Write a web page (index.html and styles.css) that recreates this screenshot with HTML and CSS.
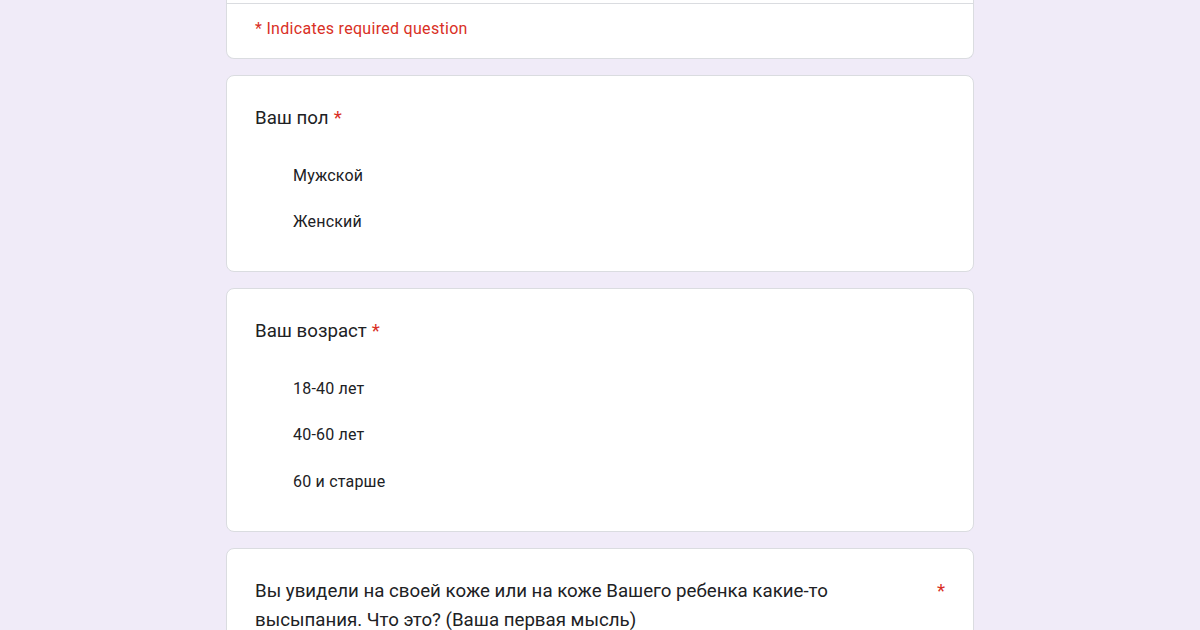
FILE: index.html
```html
<!DOCTYPE html>
<html lang="ru">
<head>
<meta charset="utf-8">
<title>Форма</title>
<link rel="stylesheet" href="styles.css">
</head>
<body>
<main class="form">
  <section class="card card-head">
    <div class="head-top"></div>
    <div class="required-note">* Indicates required question</div>
  </section>

  <section class="card question">
    <div class="q-title"><span>Ваш пол</span><span class="req">*</span></div>
    <div class="options">
      <div class="option">Мужской</div>
      <div class="option">Женский</div>
    </div>
  </section>

  <section class="card question">
    <div class="q-title"><span>Ваш возраст</span><span class="req">*</span></div>
    <div class="options">
      <div class="option">18-40 лет</div>
      <div class="option">40-60 лет</div>
      <div class="option">60 и старше</div>
    </div>
  </section>

  <section class="card question">
    <div class="q-title q-long">
      <span class="q-text">Вы увидели на своей коже или на коже Вашего ребенка какие-то высыпания. Что это? (Ваша первая мысль)</span>
      <span class="req">*</span>
    </div>
  </section>
</main>
</body>
</html>
```

FILE: styles.css
```css
html, body {
  margin: 0;
  padding: 0;
  background: #f0ebf8;
  font-family: Roboto, "Noto Sans", Arial, sans-serif;
  color: #202124;
}

.form {
  width: 748px;
  margin: 0 auto;
  display: flex;
  flex-direction: column;
  gap: 16px;
  padding-bottom: 40px;
}

.card {
  background: #fff;
  border: 1px solid #dadce0;
  border-radius: 8px;
  box-sizing: border-box;
}

.card-head {
  border-top: none;
  border-radius: 0 0 8px 8px;
}

.head-top {
  height: 3px;
  border-bottom: 1px solid #dadce0;
}

.required-note {
  padding: 15px 28px 19px;
  height: 20px;
  line-height: 20px;
  font-size: 16px;
  letter-spacing: 0.3px;
  color: #d93025;
}

.question {
  padding: 28px 28px 26px 28px;
}

.q-title {
  font-size: 18.7px;
  line-height: 28px;
  color: #202124;
}

.req {
  color: #d93025;
  margin-left: 5px;
}

.q-long {
  display: flex;
  justify-content: space-between;
  align-items: flex-start;
  height: 200px;
}

.q-text {
  width: 620px;
  line-height: 29px;
}

.options {
  margin-top: 20px;
  padding-left: 38px;
  display: flex;
  flex-direction: column;
}

.option {
  height: 46.5px;
  display: flex;
  align-items: center;
  font-size: 16px;
  letter-spacing: 0.2px;
  color: #202124;
}
```
